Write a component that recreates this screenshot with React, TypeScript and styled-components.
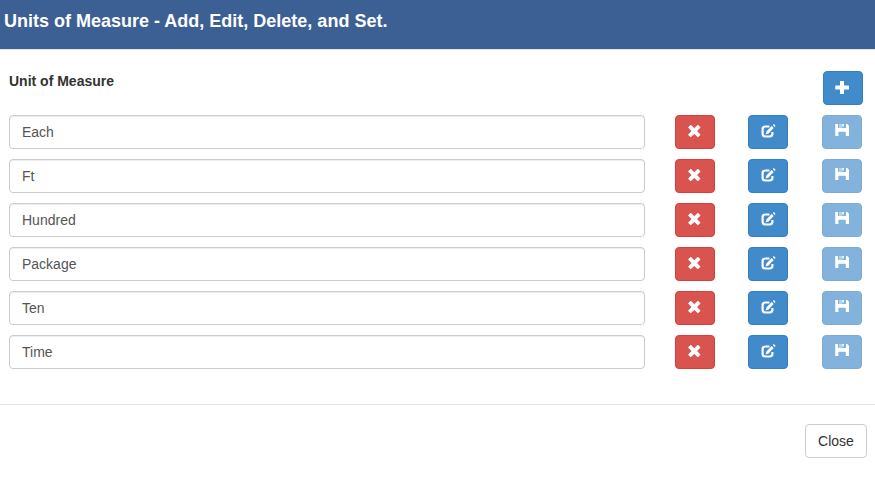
import React, { useState } from "react";
import styled, { createGlobalStyle, css } from "styled-components";

const GlobalStyle = createGlobalStyle`
  *, *::before, *::after { box-sizing: border-box; }
  body {
    margin: 0;
    background: #fff;
    color: #333;
    font: 14px/20px "Liberation Sans", Arial, sans-serif;
  }
`;

const Dialog = styled.main`
  display: flex;
  flex-direction: column;
  height: 478px;
  overflow: hidden;
`;

const Header = styled.header`
  height: 50px;
  padding: 9px 4px 0;
  background: #3c6093;
  border-bottom: 1px solid #e5e5e5;
`;

const Title = styled.h4`
  margin: 0;
  color: #fff;
  font-size: 18px;
  font-weight: bold;
  line-height: 25px;
`;

const Body = styled.section`
  display: flex;
  flex-direction: column;
  gap: 10px;
  height: 354px;
  padding: 21px 12px 0 9px;
`;

const ColumnHeader = styled.div`
  display: flex;
  justify-content: space-between;
  height: 34px;
`;

const ColumnLabel = styled.span`
  font-weight: bold;
`;

const UnitRow = styled.div`
  display: grid;
  grid-template-columns: 666px 73px 74px 40px;
`;

const UnitInput = styled.input`
  width: 636px;
  height: 34px;
  padding: 6px 12px;
  border: 1px solid #ccc;
  border-radius: 4px;
  background: #fff;
  color: #555;
  font: inherit;
  box-shadow: inset 0 1px 1px rgba(0, 0, 0, 0.075);
`;

const tones = {
  primary: css`
    background: #428bca;
    border-color: #357ebd;
  `,
  danger: css`
    background: #d9534f;
    border-color: #d43f3a;
  `,
};

const IconButton = styled.button<{ $tone: keyof typeof tones }>`
  display: flex;
  justify-content: flex-start;
  align-items: flex-start;
  width: 40px;
  height: 34px;
  padding: 8px 0 0 12px;
  border: 1px solid;
  border-radius: 4px;
  color: #fff;
  ${({ $tone }) => tones[$tone]}

  &:disabled {
    opacity: 0.65;
  }
`;

const Glyph = styled.svg`
  display: block;
  flex: none;
  width: 15px;
  height: 15px;
  fill: currentColor;
  overflow: visible;
`;

const Footer = styled.footer`
  display: flex;
  justify-content: flex-end;
  padding: 19px 8px 0;
  border-top: 1px solid #e5e5e5;
`;

const CloseButton = styled.button`
  width: 62px;
  height: 34px;
  padding: 0;
  border: 1px solid #ccc;
  border-radius: 4px;
  background: #fff;
  color: #333;
  font: inherit;
`;

const PlusIcon = () => (
  <Glyph viewBox="0 0 15 15">
    <path d="M4.400 1h3.200q.4 0 .4.400V5.500h4.600q.4 0 .4.400v3.200q0 .4-.4.400H8v4.100q0 .4-.4.400H4.400q-.4 0-.4-.4V9.500H-.400q-.4 0-.4-.4V5.900q0-.4.400-.4H4V1.400q0-.4.400-.4z" />
  </Glyph>
);

const RemoveIcon = () => (
  <Glyph viewBox="0 0 15 15">
    <path d="M3 1.100 6.300 4.300l3.300-3.200q.3-.3.600 0l2.100 2.100q.3.300 0 .600L9.100 7.100l3.200 3.300q.3.300 0 .600l-2.100 2.100q-.3.300-.600 0L6.300 9.900 3 13.100q-.3.300-.600 0L.3 11q-.3-.3 0-.600l3.200-3.300L.3 3.800q-.3-.3 0-.600l2.100-2.100q.3-.3.600 0z" />
  </Glyph>
);

const EditIcon = () => (
  <Glyph viewBox="0 0 15 15">
    <path
      d="M8.500 2.500H4.300Q1.600 2.500 1.600 5.200v4.600q0 2.700 2.700 2.700h4.400q2.700 0 2.700-2.700V7.900"
      fill="none"
      stroke="currentColor"
      strokeWidth="2.200"
    />
    <path d="m10.700 2 2 2-5.200 5.400-3 1.100 1.100-3.200zM11.700 1.100l.8-.8q.3-.3.600 0l1.300 1.300q.3.300 0 .600l-.8.900z" />
  </Glyph>
);

const SaveIcon = () => (
  <Glyph viewBox="0 0 15 15">
    <path d="M.2 0h2.800v3.500q0 .6.600.600h6.800q.6 0 .6-.6V0h1.300L14 1.700V12h-3.200V8.400q0-.6-.6-.6H4q-.6 0-.6.600V12H.2z" />
    <path d="M4 0h3v4.100H4z" opacity=".4" />
    <path d="M7 0h1.900v2.500H7z" opacity=".85" />
  </Glyph>
);

const initialUnits = ["Each", "Ft", "Hundred", "Package", "Ten", "Time"];

export default function App() {
  const [units, setUnits] = useState(initialUnits);

  return (
    <>
      <GlobalStyle />
      <Dialog>
        <Header>
          <Title>Units of Measure - Add, Edit, Delete, and Set.</Title>
        </Header>
        <Body>
          <ColumnHeader>
            <ColumnLabel>Unit of Measure</ColumnLabel>
            <IconButton
              $tone="primary"
              aria-label="Add unit"
              onClick={() => setUnits([...units, ""])}
            >
              <PlusIcon />
            </IconButton>
          </ColumnHeader>
          {units.map((unit, index) => (
            <UnitRow key={index}>
              <UnitInput defaultValue={unit} readOnly aria-label="Unit name" />
              <IconButton $tone="danger" aria-label="Delete unit">
                <RemoveIcon />
              </IconButton>
              <IconButton $tone="primary" aria-label="Edit unit">
                <EditIcon />
              </IconButton>
              <IconButton $tone="primary" disabled aria-label="Save unit">
                <SaveIcon />
              </IconButton>
            </UnitRow>
          ))}
        </Body>
        <Footer>
          <CloseButton>Close</CloseButton>
        </Footer>
      </Dialog>
    </>
  );
}
